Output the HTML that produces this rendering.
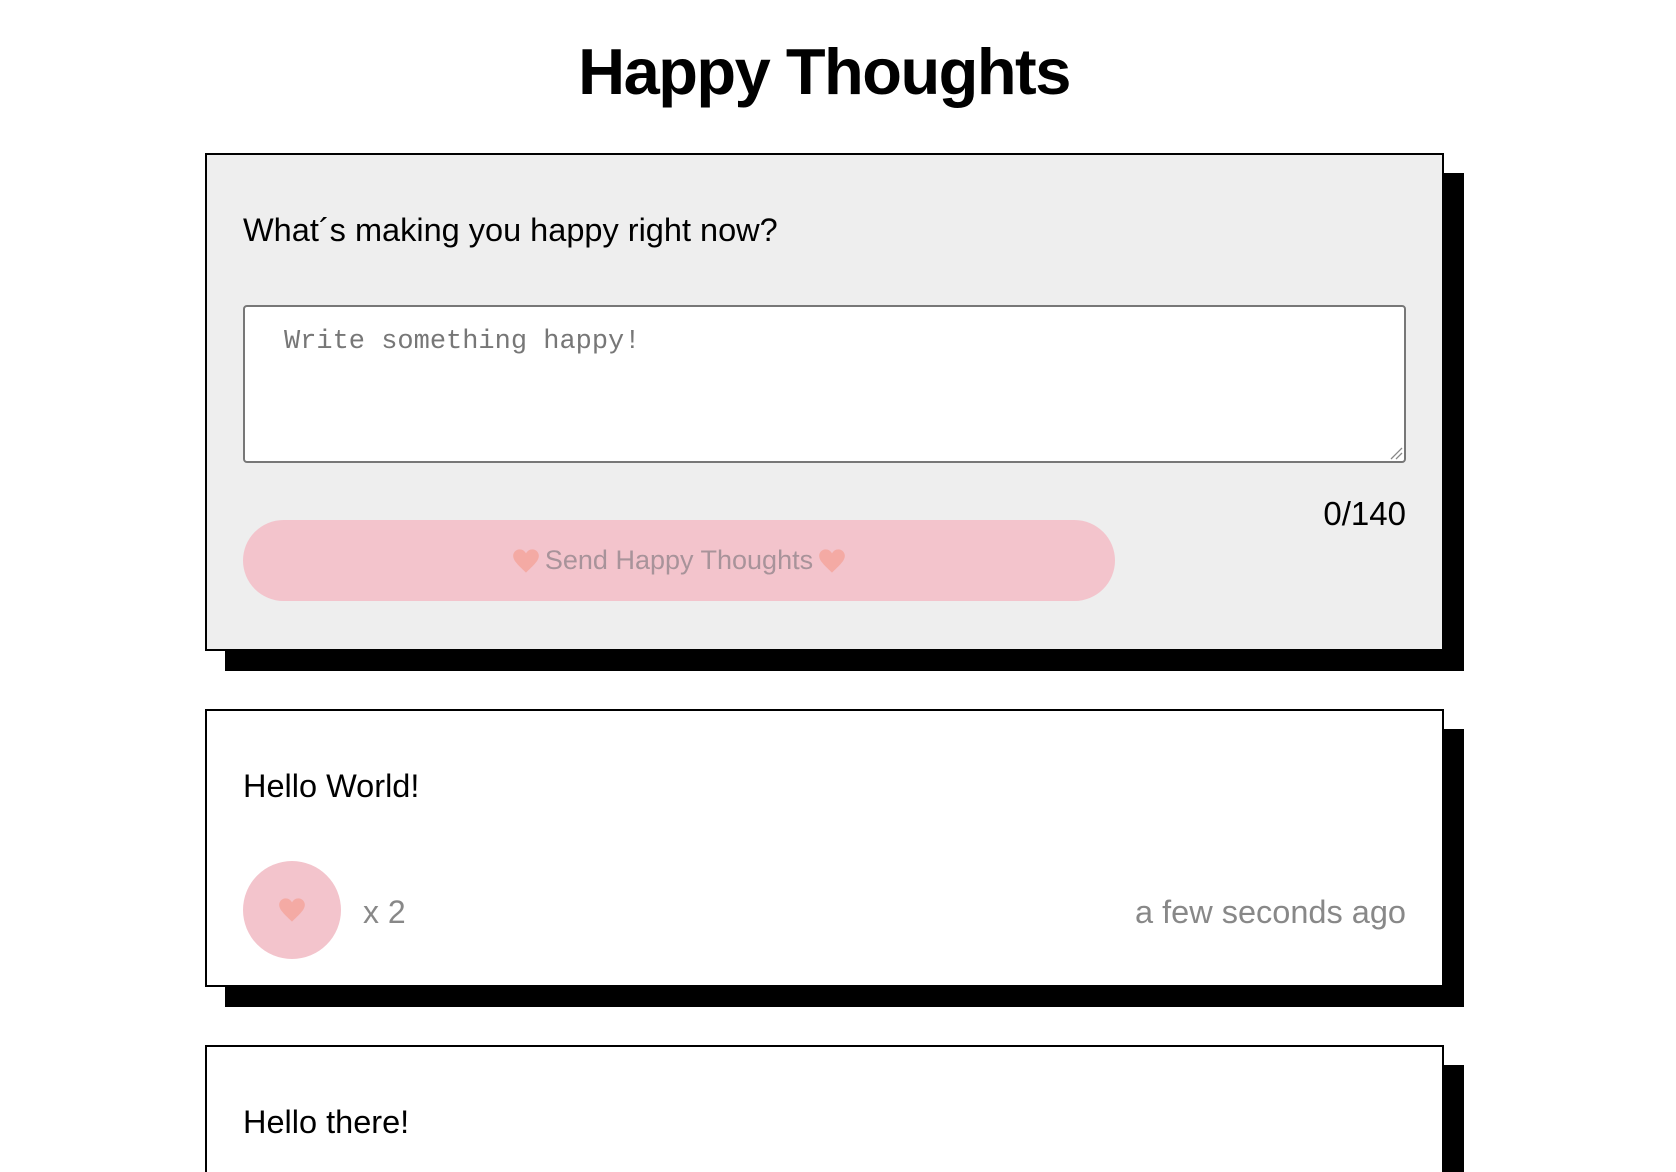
<!DOCTYPE html>
<html style="overflow:hidden;height:1172px"><head><meta charset="utf-8"><style>
*{box-sizing:border-box;margin:0;padding:0}
body{width:1676px;height:1172px;overflow:hidden;background:#fff;font-family:"Liberation Sans",Arial,sans-serif;color:#000}
#w{position:relative;width:1676px;height:1172px;overflow:hidden}
.a{position:absolute}
h1{position:absolute;left:0;width:1648px;text-align:center;top:31px;font-size:65px;font-weight:bold;letter-spacing:-1.5px;line-height:82px}
.card{position:absolute;left:205px;width:1239px;border:2px solid #000;box-shadow:20px 20px 0 #000}
.heart{display:inline-block;vertical-align:middle}
</style></head><body><div id="w">
<h1>Happy Thoughts</h1>
<div class="card" style="top:153px;height:498px;background:#eee"></div>
<div class="a" style="left:243px;top:211px;font-size:32.5px;line-height:38px">What´s making you happy right now?</div>
<div class="a" style="left:243px;top:305px;width:1163px;height:158px;background:#fff;border:2px solid #777;border-radius:4px"></div>
<div class="a" style="left:284px;top:326px;font-family:'Liberation Mono',monospace;font-size:27px;color:#777;line-height:32px">Write something happy!</div>
<svg class="a" style="left:1389px;top:446px" width="14" height="14"><path d="M2 13L13 2M7 13L13 7" stroke="#888" stroke-width="1.3"/></svg>
<div class="a" style="left:1206px;top:495px;width:200px;text-align:right;font-size:33px;line-height:38px">0/140</div>
<div class="a" style="left:243px;top:520px;width:872px;height:81px;background:#f3c4cc;border-radius:41px;display:flex;align-items:center;justify-content:center;font-size:27px;color:#a8939a">
<svg class="heart" width="28" height="26" viewBox="0 0 24 22" style="margin-right:5px"><path d="M12 21C6 15 1 11 1 6.5 1 3.5 3.5 1 6.5 1 9 1 11 2.5 12 4.5 13 2.5 15 1 17.5 1 20.5 1 23 3.5 23 6.5 23 11 18 15 12 21Z" fill="#f4aaa4"/></svg>Send Happy Thoughts<svg class="heart" width="28" height="26" viewBox="0 0 24 22" style="margin-left:5px"><path d="M12 21C6 15 1 11 1 6.5 1 3.5 3.5 1 6.5 1 9 1 11 2.5 12 4.5 13 2.5 15 1 17.5 1 20.5 1 23 3.5 23 6.5 23 11 18 15 12 21Z" fill="#f4aaa4"/></svg></div>

<div class="card" style="top:709px;height:278px;background:#fff"></div>
<div class="a" style="left:243px;top:767px;font-size:32.5px;line-height:38px">Hello World!</div>
<div class="a" style="left:243px;top:861px;width:98px;height:98px;border-radius:50%;background:#f3c4cc;display:flex;align-items:center;justify-content:center"><svg width="28" height="26" viewBox="0 0 24 22"><path d="M12 21C6 15 1 11 1 6.5 1 3.5 3.5 1 6.5 1 9 1 11 2.5 12 4.5 13 2.5 15 1 17.5 1 20.5 1 23 3.5 23 6.5 23 11 18 15 12 21Z" fill="#f4aaa4"/></svg></div>
<div class="a" style="left:363px;top:893px;font-size:32px;line-height:38px;color:#888">x 2</div>
<div class="a" style="left:1006px;top:893px;width:400px;text-align:right;font-size:32.5px;line-height:38px;color:#888">a few seconds ago</div>

<div class="a" style="left:205px;top:1045px;width:1239px;height:127px;border:2px solid #000;border-bottom:none;background:#fff"></div>
<div class="a" style="left:1444px;top:1065px;width:20px;height:107px;background:#000"></div>
<div class="a" style="left:243px;top:1103px;font-size:32.5px;line-height:38px">Hello there!</div>
</div></body></html>
